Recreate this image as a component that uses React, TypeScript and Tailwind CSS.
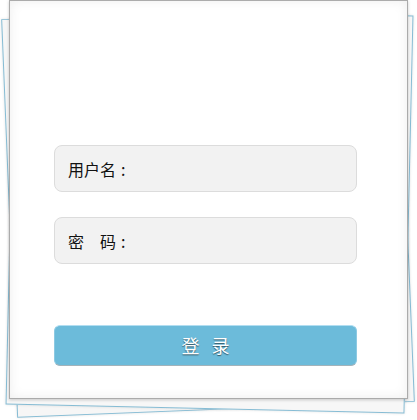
import React from "react";

export default function App() {
  return (
    <div className="relative w-[417px] h-[420px] overflow-hidden bg-white [font-family:'Noto_Sans_CJK_SC','Noto_Sans',sans-serif]">
      <div className="relative ml-[9px] w-[399px] h-[399px]">
        {/* back papers */}
        <div className="absolute left-0 top-[11px] w-[398px] h-[399px] -rotate-[2.3deg] bg-[#f6f6f6] border border-[#86bcd4] shadow-[0_0_3px_rgba(0,0,0,0.12)]" />
        <div className="absolute left-[1px] top-[11px] w-[399px] h-[398px] rotate-[1.3deg] bg-[#f7f7f7] border border-[#86bcd4] shadow-[0_0_3px_rgba(0,0,0,0.12)]" />
        {/* main card */}
        <div className="relative z-10 w-[399px] h-[399px] bg-white border border-[#ababab] shadow-[inset_0_0_12px_rgba(0,0,0,0.07),0_1px_3px_rgba(0,0,0,0.2)] pt-[144px] pl-[44px] flex flex-col">
          <div className="w-[303px] h-[47px] flex items-center bg-[#f2f2f2] border border-[#dcdcdc] rounded-[8px] pl-[13px] text-[16px] text-[#111]">
            <span>用户名</span>
            <span className="ml-[5px]">:</span>
          </div>
          <div className="mt-[25px] w-[303px] h-[47px] flex items-center bg-[#f2f2f2] border border-[#dcdcdc] rounded-[8px] pl-[13px] text-[16px] text-[#111]">
            <span>密</span>
            <span className="ml-[16px]">码</span>
            <span className="ml-[5px]">:</span>
          </div>
          <div className="mt-[61px] w-[303px] h-[41px] flex items-center justify-center gap-[12px] bg-[#6cbbda] border border-[#8cc9e2] border-t-[#b2def1] border-b-[#a3b3ba] rounded-[6px] text-[18px] text-white [text-shadow:0_1px_1px_rgba(0,0,0,0.55)]">
            <span>登</span>
            <span>录</span>
          </div>
        </div>
      </div>
    </div>
  );
}
